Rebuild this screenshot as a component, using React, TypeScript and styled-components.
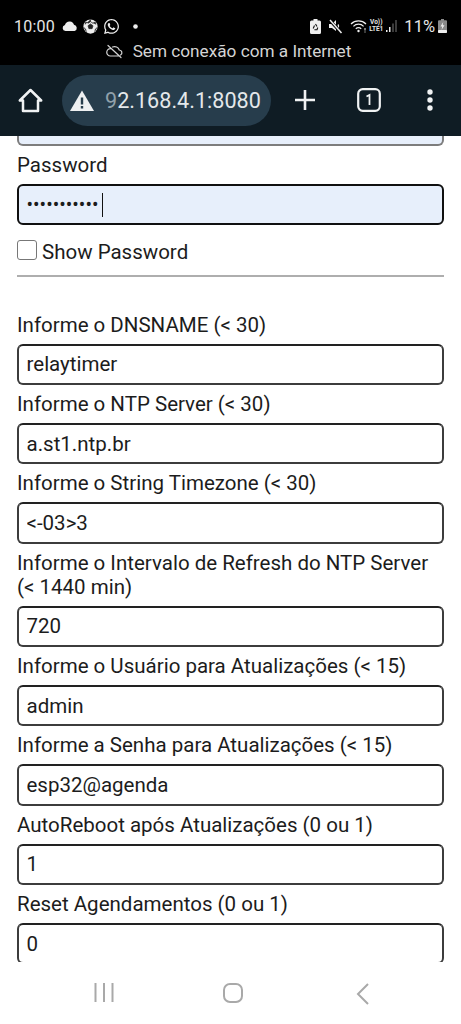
import { createGlobalStyle, styled } from "styled-components";
import { FaWhatsapp } from "react-icons/fa";

const GlobalStyle = createGlobalStyle`
  html, body {
    margin: 0;
    padding: 0;
    background: #fff;
  }
  * {
    box-sizing: border-box;
  }
`;

const Phone = styled.div`
  width: 461px;
  height: 1024px;
  display: flex;
  flex-direction: column;
  overflow: hidden;
  font-family: Roboto, "Noto Sans", sans-serif;
  background: #fff;
`;

const StatusArea = styled.div`
  height: 65px;
  background: #000;
  color: #e6e6e6;
  padding: 15px 14px 0 14px;
`;

const StatusRow = styled.div`
  height: 22px;
  display: flex;
  align-items: center;
  justify-content: space-between;
`;

const StatusGroup = styled.div`
  display: flex;
  align-items: center;
`;

const Clock = styled.span`
  font-size: 16px;
  letter-spacing: 0.2px;
  margin-right: 7px;
`;

const Battery = styled.span`
  font-size: 16.5px;
  margin: 0 3px 0 6px;
`;

const NetLabel = styled.span`
  font-size: 6.5px;
  line-height: 7px;
  font-weight: 700;
  text-align: center;
  margin: 0 3px 0 2px;
  white-space: pre;
`;

const Notice = styled.div`
  display: flex;
  justify-content: center;
  align-items: center;
  gap: 10px;
  height: 24px;
  margin-top: 2px;
  padding-right: 4px;
  font-size: 17.2px;
  color: #d4d4d4;
`;

const Toolbar = styled.div`
  height: 71px;
  background: #0f1c24;
  display: flex;
  align-items: center;
  padding: 0 0 1px 18px;
  color: #f0f2f3;
`;

const Omnibox = styled.div`
  width: 209px;
  height: 51px;
  margin-left: 19px;
  border-radius: 26px;
  background: #273d4c;
  display: flex;
  align-items: center;
  padding-left: 8px;
  overflow: hidden;
`;

const Url = styled.span`
  font-size: 21.6px;
  margin-left: 11px;
  color: #e4e8ea;
  white-space: nowrap;
`;

const FadedDigit = styled.span`
  color: #8fa0aa;
`;

const ToolIcon = styled.div<{ $left: number }>`
  margin-left: ${(p) => p.$left}px;
  display: flex;
`;

const Content = styled.main`
  flex: 1;
  min-height: 0;
  overflow: hidden;
  padding: 0 17px;
  color: #1c1c1c;
`;

const Label = styled.label`
  display: block;
  font-size: 20.5px;
  line-height: 24px;
  padding: 7px 0;
`;

const TextInput = styled.input`
  display: block;
  width: 100%;
  height: 41.3px;
  border: 2.5px solid #3c3c3c;
  border-top-color: #222;
  border-radius: 6px;
  background: #fff;
  padding: 0 7.5px;
  font-family: inherit;
  font-size: 20.5px;
  color: #1c1c1c;
  outline: none;
`;

const PasswordInput = styled(TextInput)`
  border-color: #101010;
  background: #e7effb;
  font-size: 19.4px;
`;

const CutOffInput = styled.div`
  height: 10px;
  border: 2px solid #7d7d7d;
  border-top: none;
  border-radius: 0 0 6px 6px;
  background: #e7effb;
`;

const PasswordWrap = styled.div`
  position: relative;
`;

const Caret = styled.span`
  position: absolute;
  left: 84.5px;
  top: 9px;
  width: 1.5px;
  height: 24px;
  background: #111;
`;

const CheckRow = styled.div`
  display: flex;
  align-items: center;
  gap: 5px;
  height: 24px;
  margin-top: 15px;
  font-size: 20.5px;
  line-height: 24px;
`;

const Box = styled.span`
  width: 20px;
  height: 20px;
  margin-top: -4px;
  border: 1.5px solid #777;
  border-radius: 3px;
  background: #fff;
`;

const Rule = styled.hr`
  border: none;
  height: 1.5px;
  background: #aeaeae;
  margin: 11px 0 29px;
`;

const NavBar = styled.nav`
  height: 62px;
  background: #fff;
  display: grid;
  grid-template-columns: 129px 129px 129px;
  padding: 21px 0 0 39.5px;
  justify-items: center;
  align-items: start;
`;

const Cloud = () => (
  <svg width="16" height="10" viewBox="0 0 16 10">
    <path d="M3.5 10a3 3 0 0 1-.6-5.9A5 5 0 0 1 8 0.6a4.6 4.6 0 0 1 4 3.2 3.2 3.2 0 0 1 .6 6.2z" fill="#eee" />
  </svg>
);

const Ball = () => (
  <svg width="15" height="15" viewBox="0 0 16 16" style={{ marginLeft: 5 }}>
    <circle cx="8" cy="8" r="7.6" fill="#eee" />
    <path d="M8 5.2l2.7 2-1 3.1H6.3l-1-3.1zM8 .6v2.2l-2.4 1.6L3 3.2 2.2 5.8M8 2.8l2.4 1.6L13 3.2l.8 2.6M.8 9l1.9 1.6.9 3M15.200 9l-1.900 1.600-.9 3" fill="#222" stroke="#222" strokeWidth=".7" />
  </svg>
);

const Dot = () => (
  <svg width="5" height="5" viewBox="0 0 5 5" style={{ marginLeft: 13 }}>
    <circle cx="2.500" cy="2.500" r="2.300" fill="#eee" />
  </svg>
);

const RecycleBattery = () => (
  <svg width="11" height="15" viewBox="0 0 11 15">
    <path d="M3.500 0h4v1.500H9.500a1.500 1.500 0 0 1 1.500 1.500v10.500a1.500 1.500 0 0 1-1.500 1.500h-8A1.500 1.500 0 0 1 0 13.500V3a1.500 1.500 0 0 1 1.500-1.500h2z" fill="#eee" />
    <path d="M5.500 5l1.500 2.500M7.800 8.500l-.8 2.300H4.400M3.200 9.500l1.300-3" stroke="#111" strokeWidth="1.100" fill="none" />
  </svg>
);

const Muted = () => (
  <svg width="15" height="15" viewBox="0 0 15 15" style={{ marginLeft: 7 }}>
    <path d="M1 5h3l4-4v11L4 9H1z" fill="#eee" />
    <path d="M10 5.500a3 3 0 0 1 0 3.500" stroke="#eee" strokeWidth="1.300" fill="none" />
    <path d="M1.500 1l12 13" stroke="#000" strokeWidth="3" />
    <path d="M2 1l11.500 13" stroke="#eee" strokeWidth="1.500" />
  </svg>
);

const Wifi = () => (
  <svg width="17" height="14" viewBox="0 0 17 14" style={{ marginLeft: 7 }}>
    <path d="M1 5a10.500 10.500 0 0 1 15 0M3.400 7.400a7 7 0 0 1 10.200 0M5.800 9.800a3.600 3.600 0 0 1 5.400 0" stroke="#eee" strokeWidth="1.200" fill="none" />
    <circle cx="8.500" cy="12" r="1.200" fill="#eee" />
    <path d="M15 9v2.500M15 12.500v1" stroke="#eee" strokeWidth="1" />
  </svg>
);

const Signal = () => (
  <svg width="12" height="14" viewBox="0 0 12 14">
    <rect x="0" y="11" width="1.500" height="2" fill="#eee" />
    <rect x="3" y="8" width="1.500" height="5" fill="#eee" />
    <rect x="6.500" y="4.500" width="1" height="8.500" fill="#777" />
    <rect x="9.500" y="1" width="1" height="12" fill="#777" />
  </svg>
);

const ChargingBattery = () => (
  <svg width="9" height="14" viewBox="0 0 9 14">
    <path d="M3 0h3v1.300h2a1 1 0 0 1 1 1V13a1 1 0 0 1-1 1H1a1 1 0 0 1-1-1V2.300a1 1 0 0 1 1-1h2z" fill="#8a8a8a" />
    <rect y="11" width="9" height="3" rx="1" fill="#eee" />
    <path d="M5.200 3L2.500 7.500h1.800L3.500 11l3-4.700H4.700z" fill="#eee" />
  </svg>
);

const CloudOff = () => (
  <svg width="17" height="15" viewBox="0 0 17 15">
    <path d="M4.500 4.600A3.400 3.400 0 0 0 4.400 12h8.400M14.600 11a2.700 2.700 0 0 0-1.300-5A5 5 0 0 0 6.500 3M2 1.500l13 12" stroke="#d4d4d4" strokeWidth="1.200" fill="none" strokeLinecap="round" />
  </svg>
);

const Home = () => (
  <svg width="25" height="25" viewBox="0 0 25 25">
    <path d="M12.500 2L1.800 12.500H5V23h15V12.500h3.200z" fill="none" stroke="#f0f2f3" strokeWidth="2.500" strokeLinejoin="round" />
  </svg>
);

const Warning = () => (
  <svg width="24" height="21" viewBox="0 0 24 21" style={{ flexShrink: 0 }}>
    <path d="M12 .5L24 21H0z" fill="#eef0f1" />
    <rect x="10.800" y="7.500" width="2.400" height="7" fill="#273d4c" />
    <rect x="10.800" y="16" width="2.400" height="2.500" fill="#273d4c" />
  </svg>
);

const Plus = () => (
  <svg width="22" height="22" viewBox="0 0 22 22">
    <path d="M11 1v20M1 11h20" stroke="#f0f2f3" strokeWidth="2.600" />
  </svg>
);

const TabCount = () => (
  <svg width="24" height="24" viewBox="0 0 24 24">
    <rect x="1.200" y="1.200" width="21.600" height="21.600" rx="4.500" fill="none" stroke="#f0f2f3" strokeWidth="2.200" />
    <path d="M9.500 8.500L12.500 7v10" fill="none" stroke="#f0f2f3" strokeWidth="1.800" />
  </svg>
);

const Kebab = () => (
  <svg width="8" height="22" viewBox="0 0 8 22">
    <circle cx="4" cy="3" r="2.700" fill="#f0f2f3" />
    <circle cx="4" cy="11" r="2.700" fill="#f0f2f3" />
    <circle cx="4" cy="19" r="2.700" fill="#f0f2f3" />
  </svg>
);

const Recents = () => (
  <svg width="20" height="20" viewBox="0 0 20 20">
    <path d="M1.500 0v19M10 0v19M18.500 0v19" stroke="#a9a9a9" strokeWidth="2" />
  </svg>
);

const HomeNav = () => (
  <svg width="20" height="20" viewBox="0 0 20 20">
    <rect x="1" y="1" width="18" height="18" rx="6" fill="none" stroke="#a9a9a9" strokeWidth="2" />
  </svg>
);

const BackNav = () => (
  <svg width="13" height="22" viewBox="0 0 13 22">
    <path d="M12 1L2 11l10 10" fill="none" stroke="#a9a9a9" strokeWidth="2" />
  </svg>
);

const fields = [
  { label: "Informe o DNSNAME (< 30)", value: "relaytimer" },
  { label: "Informe o NTP Server (< 30)", value: "a.st1.ntp.br" },
  { label: "Informe o String Timezone (< 30)", value: "<-03>3" },
  { label: "Informe o Intervalo de Refresh do NTP Server (< 1440 min)", value: "720" },
  { label: "Informe o Usuário para Atualizações (< 15)", value: "admin" },
  { label: "Informe a Senha para Atualizações (< 15)", value: "esp32@agenda" },
  { label: "AutoReboot após Atualizações (0 ou 1)", value: "1" },
  { label: "Reset Agendamentos (0 ou 1)", value: "0" },
];

export default function App() {
  return (
    <Phone>
      <GlobalStyle />
      <StatusArea>
        <StatusRow>
          <StatusGroup>
            <Clock>10:00</Clock>
            <Cloud />
            <Ball />
            <FaWhatsapp size={17} color="#eee" style={{ marginLeft: 5 }} />
            <Dot />
          </StatusGroup>
          <StatusGroup>
            <RecycleBattery />
            <Muted />
            <Wifi />
            <NetLabel>{"Vo))\nLTE1"}</NetLabel>
            <Signal />
            <Battery>11%</Battery>
            <ChargingBattery />
          </StatusGroup>
        </StatusRow>
        <Notice>
          <CloudOff />
          Sem conexão com a Internet
        </Notice>
      </StatusArea>
      <Toolbar>
        <Home />
        <Omnibox>
          <Warning />
          <Url>
            <FadedDigit>9</FadedDigit>2.168.4.1:8080
          </Url>
        </Omnibox>
        <ToolIcon $left={23}>
          <Plus />
        </ToolIcon>
        <ToolIcon $left={41}>
          <TabCount />
        </ToolIcon>
        <ToolIcon $left={45}>
          <Kebab />
        </ToolIcon>
      </Toolbar>
      <Content>
        <CutOffInput />
        <Label>Password</Label>
        <PasswordWrap>
          <PasswordInput type="password" defaultValue="esp32agenda" readOnly />
          <Caret />
        </PasswordWrap>
        <CheckRow>
          <Box />
          Show Password
        </CheckRow>
        <Rule />
        {fields.map((f) => (
          <div key={f.label}>
            <Label>{f.label}</Label>
            <TextInput defaultValue={f.value} readOnly />
          </div>
        ))}
      </Content>
      <NavBar>
        <Recents />
        <HomeNav />
        <BackNav />
      </NavBar>
    </Phone>
  );
}
